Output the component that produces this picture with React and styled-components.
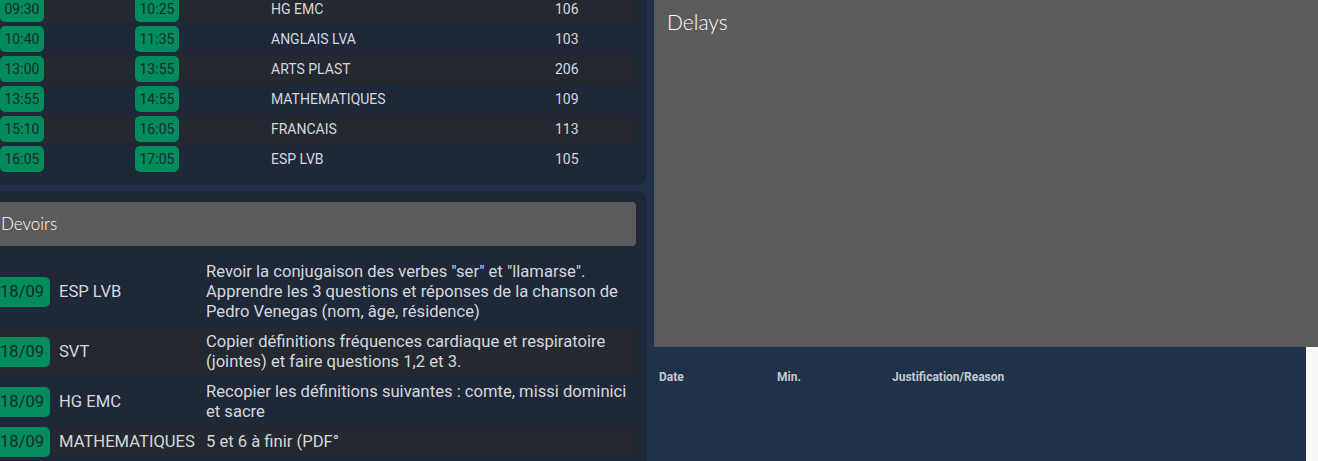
import React from "react";
import styled, { createGlobalStyle } from "styled-components";

const Global = createGlobalStyle`
  html, body { margin: 0; padding: 0; background: #f8f8f8; overflow: hidden; height: 461px; }
  body { font-family: Roboto, "Liberation Sans", sans-serif; }
  * { box-sizing: border-box; }
`;

const Page = styled.div`
  display: flex;
  align-items: stretch;
  width: 1316px;
  min-height: 480px;
  margin: -6px 0 0 -10px;
  background: #1f3249;
`;

const LeftColumn = styled.div`
  width: 657px;
  flex: none;
  display: flex;
  flex-direction: column;
  gap: 6px;
`;

const Card = styled.section`
  background: #1e2839;
  border-radius: 10px;
  padding: ${(p) => p.$pad};
  flex: ${(p) => (p.$grow ? 1 : "none")};
`;

const TimeRow = styled.div`
  display: grid;
  grid-template-columns: 135px 136px 284px 1fr;
  align-items: center;
  height: 30px;
  color: #d5d8dd;
  font-size: 14px;
  &:nth-child(odd) { background: #232831; }
`;

const Badge = styled.span`
  display: inline-block;
  justify-self: start;
  background: #008c5d;
  color: #172a2c;
  border-radius: 5px;
  font-size: ${(p) => p.$size}px;
  height: ${(p) => p.$h}px;
  line-height: ${(p) => p.$h}px;
  padding: 0 ${(p) => p.$px}px;
`;

const SectionHeader = styled.div`
  background: #5b5b5b;
  color: #ffffff;
  font-family: Lato, "Open Sans", sans-serif;
  font-weight: 300;
  font-size: ${(p) => p.$size}px;
  border-radius: ${(p) => p.$radius}px;
`;

const DevoirsHeader = styled(SectionHeader)`
  height: 44px;
  display: flex;
  align-items: center;
  padding: 0 0 2px 7px;
  margin-bottom: 11px;
`;

const HwRow = styled.div`
  display: grid;
  grid-template-columns: 65px 147px 1fr;
  align-items: center;
  color: #d5d8dd;
  font-size: 16.6px;
  line-height: 20px;
  &:nth-child(odd) { background: #232831; }
`;

const HwText = styled.div`
  padding: 5px 0;
`;

const RightColumn = styled.div`
  flex: 1;
  min-width: 0;
  display: flex;
  flex-direction: column;
`;

const DelaysHeader = styled(SectionHeader)`
  width: 664px;
  margin-left: 7px;
  height: 353px;
  padding: 15px 13px;
  line-height: 26px;
`;

const DelaysTable = styled.div`
  display: grid;
  grid-template-columns: 118px 115px 1fr;
  padding: 23px 12px 0;
  color: #c5cad1;
  font-size: 12px;
  font-weight: 700;
  line-height: 14px;
`;

const times = [
  ["09:30", "10:25", "HG EMC", "106"],
  ["10:40", "11:35", "ANGLAIS LVA", "103"],
  ["13:00", "13:55", "ARTS PLAST", "206"],
  ["13:55", "14:55", "MATHEMATIQUES", "109"],
  ["15:10", "16:05", "FRANCAIS", "113"],
  ["16:05", "17:05", "ESP LVB", "105"],
];

const homework = [
  ["18/09", "ESP LVB", 'Revoir la conjugaison des verbes "ser" et "llamarse". Apprendre les 3 questions et réponses de la chanson de Pedro Venegas (nom, âge, résidence)'],
  ["18/09", "SVT", "Copier définitions fréquences cardiaque et respiratoire (jointes) et faire questions 1,2 et 3."],
  ["18/09", "HG EMC", "Recopier les définitions suivantes : comte, missi dominici et sacre"],
  ["18/09", "MATHEMATIQUES", "5 et 6 à finir (PDF°"],
];

export default function App() {
  return (
    <>
      <Global />
      <Page>
        <LeftColumn>
          <Card $pad="0 11px 11px 10px">
            {times.map(([a, b, s, r]) => (
              <TimeRow key={a + s}>
                <Badge $size={14} $h={26} $px={4.5}>{a}</Badge>
                <Badge $size={14} $h={26} $px={4.5}>{b}</Badge>
                <span>{s}</span>
                <span>{r}</span>
              </TimeRow>
            ))}
          </Card>
          <Card $pad="11px 11px 12px 4px" $grow>
            <DevoirsHeader $size={17} $radius={4}>Devoirs</DevoirsHeader>
            {homework.map(([d, s, t]) => (
              <HwRow key={s}>
                <Badge $size={16.6} $h={30} $px={6}>{d}</Badge>
                <span>{s}</span>
                <HwText>{t}</HwText>
              </HwRow>
            ))}
          </Card>
        </LeftColumn>
        <RightColumn>
          <DelaysHeader $size={21} $radius={0}>Delays</DelaysHeader>
          <DelaysTable>
            <span>Date</span>
            <span>Min.</span>
            <span>Justification/Reason</span>
          </DelaysTable>
        </RightColumn>
      </Page>
    </>
  );
}
